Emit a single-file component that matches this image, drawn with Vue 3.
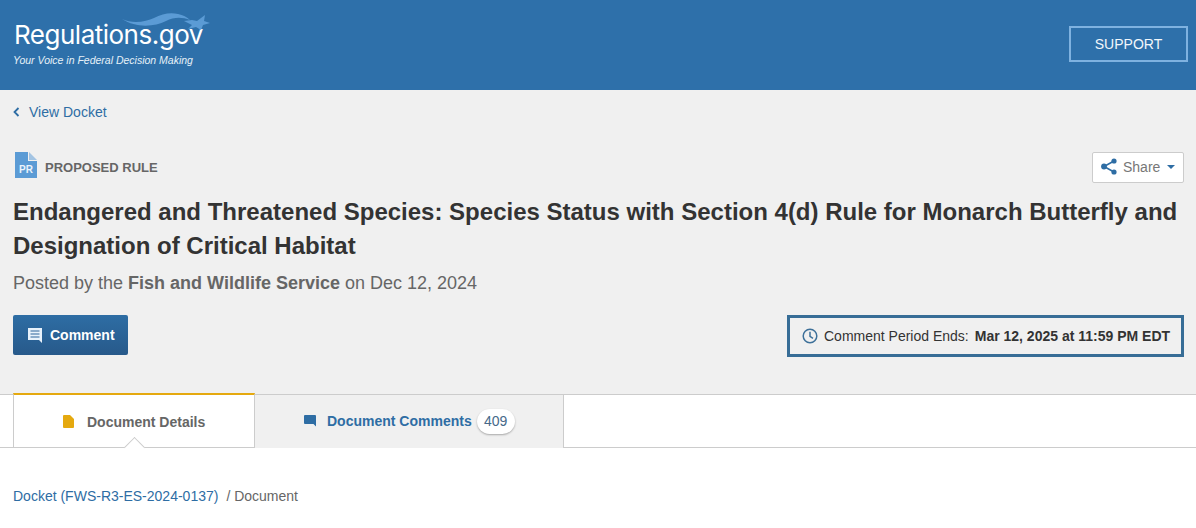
<template>
  <div class="page">
    <header class="topbar">
      <div class="logo">
        <svg class="swoosh" width="92" height="24" viewBox="119 8 92 24">
          <path d="M122 19C132 24 146 22 154 18C162 14 170 12 178 14C183 15 187 17 190 20C182 17 174 17 166 21C154 27 136 28 122 19Z" fill="#5b9bd5" />
          <path d="M205 15L204 21L210 23L203 25L201 30L196 27L188 29L192 25L184 21L192 20L197 21Z" fill="#5b9bd5" />
        </svg>
        <div class="logo-name">Regulations.gov</div>
        <div class="logo-tag">Your Voice in Federal Decision Making</div>
      </div>
      <a class="support">SUPPORT</a>
    </header>

    <section class="intro">
      <a class="back">
        <svg width="7" height="10" viewBox="0 0 7 10"><path d="M5.5 1L1.5 5L5.5 9" fill="none" stroke="#2e6da4" stroke-width="1.8" /></svg>
        View Docket
      </a>

      <div class="type-row">
        <div class="type">
          <svg width="22" height="26" viewBox="0 0 22 26">
            <path d="M0 0H13V9H22V26H0Z" fill="#5b9bd5" />
            <path d="M14 0L22 8H14Z" fill="#a3c4e3" />
            <text x="11" y="21" text-anchor="middle" class="pr">PR</text>
          </svg>
          <span>PROPOSED RULE</span>
        </div>
        <button class="share">
          <svg width="16" height="17" viewBox="0 0 16 17">
            <path d="M13 3L3 8.5L13 14" fill="none" stroke="#2e6da4" stroke-width="1.6" />
            <circle cx="13" cy="3" r="2.6" fill="#2e6da4" />
            <circle cx="3" cy="8.5" r="2.9" fill="#2e6da4" />
            <circle cx="13" cy="14" r="2.6" fill="#2e6da4" />
          </svg>
          <span>Share</span>
          <i class="caret"></i>
        </button>
      </div>

      <h1>Endangered and Threatened Species: Species Status with Section 4(d) Rule for Monarch Butterfly and Designation of Critical Habitat</h1>
      <p class="posted">Posted by the <b>Fish and Wildlife Service</b> on Dec 12, 2024</p>

      <div class="action-row">
        <button class="comment">
          <svg width="14" height="15" viewBox="0 0 14 15">
            <path d="M0 0H14V15L11 12H0Z" fill="#e8f2fb" />
            <path d="M2.5 3H11.5M2.5 6H11.5M2.5 9H11.5" stroke="#2c659b" stroke-width="1.2" />
          </svg>
          Comment
        </button>
        <div class="period">
          <svg width="16" height="16" viewBox="0 0 16 16">
            <circle cx="8" cy="8" r="6.8" fill="none" stroke="#3d7099" stroke-width="1.5" />
            <path d="M8 3.8V8.4L11 10.4" fill="none" stroke="#3d7099" stroke-width="1.5" />
          </svg>
          <span>Comment Period Ends:</span>
          <b>Mar 12, 2025 at 11:59 PM EDT</b>
        </div>
      </div>
    </section>

    <nav class="tabs">
      <div class="tab active">
        <svg width="11" height="13" viewBox="0 0 11 13"><path d="M0 1Q0 0 1 0H7L11 4V12Q11 13 10 13H1Q0 13 0 12Z" fill="#e5a90f" /></svg>
        <span>Document Details</span>
        <i class="notch"></i>
      </div>
      <div class="tab other">
        <svg width="12" height="12" viewBox="0 0 12 12"><path d="M0 1Q0 0 1 0H11Q12 0 12 1V11.5L9.5 9H1Q0 9 0 8Z" fill="#2e6da4" /></svg>
        <span>Document Comments</span>
        <em class="count">409</em>
      </div>
    </nav>

    <div class="crumbs">
      <a>Docket (FWS-R3-ES-2024-0137)</a>
      <span>/ Document</span>
    </div>
  </div>
</template>

<script setup>
</script>

<style>
body {
  background: #fff;
}
</style>

<style scoped>
.page {
  width: 1196px;
  height: 528px;
  overflow: hidden;
  font-family: "Liberation Sans", Arial, sans-serif;
  color: #333;
}

.topbar {
  height: 90px;
  background: #2e70aa;
  display: flex;
  justify-content: space-between;
  align-items: flex-start;
  padding: 0 8px 0 14px;
  box-sizing: border-box;
}
.logo {
  position: relative;
  padding-top: 19px;
  color: #fff;
}
.logo-name {
  font-family: Inter, sans-serif;
  font-size: 26px;
  font-weight: 400;
  line-height: 32px;
  letter-spacing: -0.5px;
  font-variant-ligatures: none;
}
.logo-tag {
  font-size: 10.5px;
  line-height: 14px;
  font-style: italic;
  margin-top: 2px;
  margin-left: -1px;
  color: #e6f0f8;
}
.swoosh {
  position: absolute;
  left: 105px;
  top: 8px;
}
.support {
  margin-top: 26px;
  width: 119px;
  height: 36px;
  box-sizing: border-box;
  border: 2px solid #7fb2e0;
  color: #f2f7fb;
  font-size: 14px;
  display: flex;
  align-items: center;
  justify-content: center;
}

.intro {
  height: 304px;
  background: #f0f0f0;
  padding: 14px 12px 0 13px;
  box-sizing: border-box;
}
.back {
  display: flex;
  align-items: center;
  gap: 9px;
  height: 16px;
  font-size: 14px;
  color: #2e6da4;
}
.type-row {
  margin-top: 32px;
  display: flex;
  justify-content: space-between;
  align-items: flex-start;
}
.type {
  display: flex;
  align-items: flex-start;
  gap: 8px;
  padding-left: 2px;
  font-size: 13px;
  line-height: 16px;
  font-weight: 700;
  color: #666;
}
.type span {
  margin-top: 8px;
}
.pr {
  font: 700 10px "Liberation Sans", sans-serif;
  fill: #eaf3fb;
}
.share {
  width: 92px;
  height: 31px;
  background: #fff;
  border: 1px solid #ccc;
  border-radius: 2px;
  display: flex;
  align-items: center;
  padding: 0 0 2px 8px;
  gap: 6px;
  font-family: inherit;
  font-size: 14px;
  color: #777;
}
.caret {
  margin-left: 1px;
  border-top: 4px solid #2e6da4;
  border-left: 4px solid transparent;
  border-right: 4px solid transparent;
}

h1 {
  margin: 12px 0 0;
  font-size: 24px;
  line-height: 34px;
  font-weight: 700;
  color: #333;
}
.posted {
  margin: 8px 0 0;
  font-size: 18px;
  line-height: 24px;
  color: #666;
}
.action-row {
  margin-top: 20px;
  display: flex;
  justify-content: space-between;
  align-items: flex-start;
}
.comment {
  width: 115px;
  height: 40px;
  border: 0;
  border-radius: 2px;
  padding: 0 0 0 15px;
  background: linear-gradient(#2e6da4, #27598a);
  color: #fff;
  font-family: inherit;
  font-size: 14px;
  font-weight: 700;
  display: flex;
  align-items: center;
  gap: 8px;
}
.period {
  width: 397px;
  height: 42px;
  box-sizing: border-box;
  border: 3px solid #376d96;
  display: flex;
  align-items: center;
  padding-left: 12px;
  font-size: 14px;
  color: #333;
}
.period span {
  margin-left: 6px;
}
.period b {
  margin-left: 6px;
}

.tabs {
  height: 54px;
  box-sizing: border-box;
  border-top: 1px solid #ccc;
  border-bottom: 1px solid #ccc;
  padding-left: 13px;
  display: flex;
}
.tab {
  position: relative;
  box-sizing: border-box;
  display: flex;
  align-items: center;
  font-size: 14px;
  font-weight: 700;
}
.active {
  width: 242px;
  margin-top: -2px;
  height: 55px;
  border-top: 2px solid #e5a90f;
  border-left: 1px solid #ccc;
  border-right: 1px solid #ccc;
  padding-left: 49px;
  gap: 13px;
  color: #666;
}
.notch {
  position: absolute;
  left: 112.5px;
  bottom: -7px;
  width: 15px;
  height: 15px;
  box-sizing: border-box;
  background: #fff;
  border-top: 1px solid #ccc;
  border-left: 1px solid #ccc;
  transform: rotate(45deg);
}
.other {
  width: 309px;
  height: 53px;
  padding-bottom: 1px;
  background: #f0f0f0;
  border-right: 1px solid #ccc;
  padding-left: 49px;
  gap: 11px;
  color: #2e6da4;
}
.count {
  width: 38px;
  height: 25px;
  margin-left: -6px;
  border-radius: 13px;
  background: #fff;
  box-shadow: 0 1px 2px rgba(0, 0, 0, 0.3);
  font-style: normal;
  font-weight: 400;
  display: flex;
  align-items: center;
  justify-content: center;
  color: #46698a;
}

.crumbs {
  margin-top: 39px;
  padding-left: 13px;
  display: flex;
  gap: 8px;
  font-size: 14px;
  line-height: 18px;
  color: #666;
}
.crumbs a {
  color: #2e6da4;
}
</style>
